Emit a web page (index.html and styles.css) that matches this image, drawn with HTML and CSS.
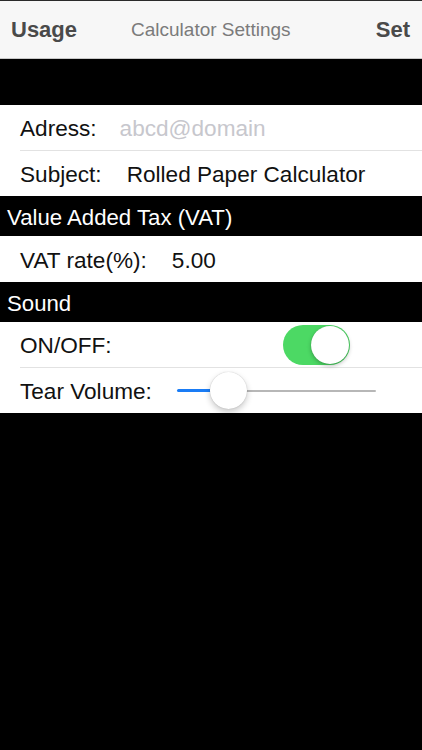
FILE: index.html
```html
<!DOCTYPE html>
<html>
<head>
<meta charset="utf-8">
<link rel="stylesheet" href="styles.css">
</head>
<body>
<div class="screen">
  <header class="nav">
    <span class="nav-btn">Usage</span>
    <span class="nav-title">Calculator Settings</span>
    <span class="nav-btn right">Set</span>
  </header>
  <div class="spacer"></div>
  <section class="group">
    <div class="row sep">
      <span class="label">Adress:</span>
      <span class="value placeholder">abcd@domain</span>
    </div>
    <div class="row short">
      <span class="label">Subject:</span>
      <span class="value">Rolled Paper Calculator</span>
    </div>
  </section>
  <div class="section-head">Value Added Tax (VAT)</div>
  <section class="group">
    <div class="row">
      <span class="label">VAT rate(%):</span>
      <span class="value vat">5.00</span>
    </div>
  </section>
  <div class="section-head">Sound</div>
  <section class="group">
    <div class="row sep">
      <span class="label">ON/OFF:</span>
      <div class="switch"><div class="knob"></div></div>
    </div>
    <div class="row short">
      <span class="label">Tear Volume:</span>
      <div class="slider">
        <div class="track-fill"></div>
        <div class="track-rest"></div>
        <div class="thumb"></div>
      </div>
    </div>
  </section>
</div>
</body>
</html>
```

FILE: styles.css
```css
html, body {
  margin: 0;
  padding: 0;
  background: #000;
}
.screen {
  width: 422px;
  height: 750px;
  background: #000;
  font-family: "Liberation Sans", Arial, sans-serif;
  overflow: hidden;
}
.nav {
  box-sizing: border-box;
  height: 59px;
  background: #f7f7f7;
  border-top: 1px solid #2a2a2a;
  border-bottom: 1px solid #c8c8c8;
  display: flex;
  align-items: center;
  padding: 1px 12px 0 11px;
}
.nav-btn {
  font-size: 22px;
  font-weight: bold;
  color: #4a4a4a;
}
.nav-btn.right {
  margin-left: auto;
}
.nav-title {
  font-size: 19px;
  color: #7b7b7b;
  margin-left: 54px;
}
.spacer {
  height: 46px;
}
.group {
  background: #fff;
}
.row {
  box-sizing: border-box;
  height: 46px;
  display: flex;
  align-items: center;
  margin-left: 20px;
  padding-top: 3px;
  font-size: 22.6px;
  color: #111;
}
.row.short {
  height: 45px;
}
.row.sep {
  border-bottom: 1px solid #e2e2e2;
}
.value {
  margin-left: 25px;
}
.value.placeholder {
  margin-left: 23px;
  color: #c7c7cd;
}
.value.vat {
  margin-left: 25px;
}
.section-head {
  box-sizing: border-box;
  height: 40px;
  display: flex;
  align-items: center;
  padding: 3px 0 0 7px;
  font-size: 22.2px;
  color: #fff;
  background: #000;
}
.switch {
  box-sizing: border-box;
  margin: -3px 72px 0 auto;
  width: 67px;
  height: 40px;
  border-radius: 20px;
  background: #4cd964;
  display: flex;
  align-items: center;
  justify-content: flex-end;
  padding-right: 1px;
}
.knob {
  width: 38px;
  height: 38px;
  border-radius: 50%;
  background: #fff;
  box-shadow: 0 2px 4px rgba(0,0,0,0.25), 0 0 1px rgba(0,0,0,0.2);
}
.slider {
  position: relative;
  margin: -3px 46px 0 auto;
  width: 199px;
  height: 38px;
  display: flex;
  align-items: center;
}
.track-fill {
  width: 33px;
  height: 3px;
  background: #1a7cf5;
  border-radius: 2px 0 0 2px;
}
.track-rest {
  flex: 1;
  height: 2px;
  background: #b7b7b7;
  border-radius: 0 1px 1px 0;
}
.thumb {
  position: absolute;
  left: 33px;
  top: 0;
  width: 37px;
  height: 37px;
  border-radius: 50%;
  background: #fff;
  box-shadow: 0 3px 6px rgba(0,0,0,0.22), 0 0 1px rgba(0,0,0,0.25);
}
```
